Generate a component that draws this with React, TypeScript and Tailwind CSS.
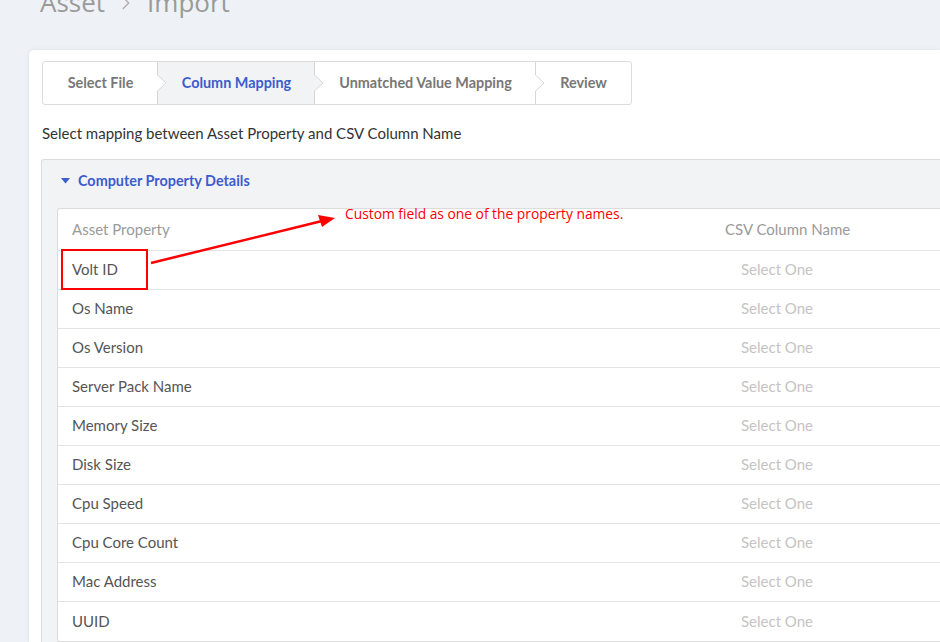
import { ChevronRight } from "lucide-react";

const steps = [
  { label: "Select File", w: "w-[115px]", active: false },
  { label: "Column Mapping", w: "w-[157px]", active: true },
  { label: "Unmatched Value Mapping", w: "w-[221px]", active: false },
  { label: "Review", w: "w-[95px]", active: false },
];

const rows = [
  "Volt ID",
  "Os Name",
  "Os Version",
  "Server Pack Name",
  "Memory Size",
  "Disk Size",
  "Cpu Speed",
  "Cpu Core Count",
  "Mac Address",
  "UUID",
];

function Stepper() {
  return (
    <div className="flex h-[44px] w-[590px] rounded-[3px] border border-[#dcdcdc] bg-white font-['Lato',sans-serif] text-[14.4px] font-bold">
      {steps.map((s, i) => (
        <div
          key={s.label}
          className={`relative flex ${s.w} items-center justify-center ${
            s.active ? "bg-[#f2f3f5] text-[#3c5ccf]" : "text-[#777]"
          } ${i === 0 ? "rounded-l-[3px]" : ""}`}
        >
          <span>{s.label}</span>
          {i < steps.length - 1 && (
            <svg
              className="absolute left-full top-0 z-10 -ml-px"
              width="12"
              height="42"
              viewBox="0 0 12 42"
            >
              <polygon points="0,0 0,13 9,21 0,29 0,42" fill={s.active ? "#f2f3f5" : "#fff"} />
              <polyline
                points="0.5,0 0.5,13 9,21 0.5,29 0.5,42"
                fill="none"
                stroke="#d6d6d6"
                strokeWidth="1"
              />
            </svg>
          )}
        </div>
      ))}
    </div>
  );
}

export default function App() {
  return (
    <div className="relative h-[642px] w-[940px] overflow-hidden bg-[#eef2f6] font-['Lato',sans-serif]">
      <div className="-mt-[17px] flex h-[67px] items-start pl-[40px] font-['Open_Sans',sans-serif] text-[26px] text-[#9a9a9a]">
        <span>Asset</span>
        <ChevronRight className="mx-[10px] mt-[9px] text-[#aaa]" size={22} strokeWidth={1.3} />
        <span>Import</span>
      </div>

      <div className="ml-[29px] rounded-tl-[5px] bg-white pl-[13px] pt-[11px] shadow-[0_0_4px_rgba(0,0,0,0.08)]">
        <Stepper />

        <p className="mt-[17px] text-[15px] text-[#333]">
          Select mapping between Asset Property and CSV Column Name
        </p>

        <div className="mt-[14px] -ml-px rounded-tl-[3px] border-l border-t border-[#dcdcdc] bg-[#f2f3f5] pl-[15px]">
          <div className="flex h-[48px] items-center gap-[8px] pb-[6px] pl-[4px] text-[14.4px] font-bold text-[#3c5ccf]">
            <svg width="9" height="6" viewBox="0 0 9 6">
              <polygon points="0,0 9,0 4.5,5.5" fill="#3c5ccf" />
            </svg>
            <span>Computer Property Details</span>
          </div>

          <div className="rounded-l-[3px] border-y border-l border-[#dcdcdc] bg-white text-[15px]">
            <div className="flex h-[42px] items-center border-b border-[#e4e4e4] text-[#9a9a9a]">
              <div className="w-[653px] pl-[14px]">Asset Property</div>
              <div className="pl-[14px]">CSV Column Name</div>
            </div>
            {rows.map((r, i) => (
              <div
                key={r}
                className={`flex h-[39px] items-center ${
                  i < rows.length - 1 ? "border-b border-[#e4e4e4]" : ""
                }`}
              >
                <div className="w-[653px] pl-[14px] text-[#555]">{r}</div>
                <div className="pl-[30px] text-[#c4c4c4]">Select One</div>
              </div>
            ))}
          </div>
        </div>
      </div>

      {/* annotation */}
      <div className="absolute left-[61px] top-[249px] h-[41px] w-[87px] border-2 border-[#ff0000]" />
      <svg className="absolute left-0 top-0" width="940" height="642">
        <line x1="151" y1="263" x2="322" y2="221" stroke="#ff0000" strokeWidth="2.5" />
        <polygon points="335,218 318,215 322,227" fill="#ff0000" />
      </svg>
      <div className="absolute left-[345px] top-[204px] font-['Open_Sans',sans-serif] text-[13.8px] text-[#ff0000]">
        Custom field as one of the property names.
      </div>
    </div>
  );
}
